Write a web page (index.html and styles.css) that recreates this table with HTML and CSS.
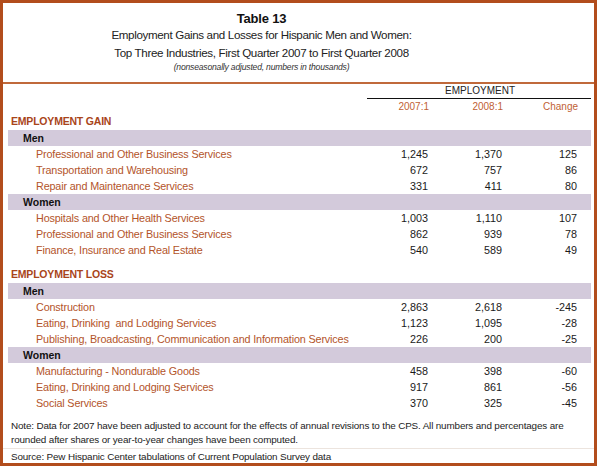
FILE: index.html
```html
<!DOCTYPE html>
<html>
<head>
<meta charset="utf-8">
<link rel="stylesheet" href="styles.css">
</head>
<body>
<div class="frame">
  <header class="head">
    <div class="t1">Table 13</div>
    <div class="t2">Employment Gains and Losses for Hispanic Men and Women:</div>
    <div class="t2">Top Three Industries, First Quarter 2007 to First Quarter 2008</div>
    <div class="t3">(nonseasonally adjusted, numbers in thousands)</div>
  </header>
  <div class="sep"></div>
  <div class="colhead">
    <div class="emp">EMPLOYMENT</div>
    <div class="cols"><span>2007:1</span><span>2008:1</span><span>Change</span></div>
  </div>

  <div class="sec">EMPLOYMENT GAIN</div>
  <div class="band">Men</div>
  <div class="row"><span class="lbl">Professional and Other Business Services</span><span>1,245</span><span>1,370</span><span>125</span></div>
  <div class="row"><span class="lbl">Transportation and Warehousing</span><span>672</span><span>757</span><span>86</span></div>
  <div class="row"><span class="lbl">Repair and Maintenance Services</span><span>331</span><span>411</span><span>80</span></div>
  <div class="band">Women</div>
  <div class="row"><span class="lbl">Hospitals and Other Health Services</span><span>1,003</span><span>1,110</span><span>107</span></div>
  <div class="row"><span class="lbl">Professional and Other Business Services</span><span>862</span><span>939</span><span>78</span></div>
  <div class="row"><span class="lbl">Finance, Insurance and Real Estate</span><span>540</span><span>589</span><span>49</span></div>

  <div class="sec loss">EMPLOYMENT LOSS</div>
  <div class="band">Men</div>
  <div class="row"><span class="lbl">Construction</span><span>2,863</span><span>2,618</span><span>-245</span></div>
  <div class="row"><span class="lbl">Eating, Drinking&nbsp; and Lodging Services</span><span>1,123</span><span>1,095</span><span>-28</span></div>
  <div class="row"><span class="lbl">Publishing, Broadcasting, Communication and Information Services</span><span>226</span><span>200</span><span>-25</span></div>
  <div class="band">Women</div>
  <div class="row"><span class="lbl">Manufacturing - Nondurable Goods</span><span>458</span><span>398</span><span>-60</span></div>
  <div class="row"><span class="lbl">Eating, Drinking and Lodging Services</span><span>917</span><span>861</span><span>-56</span></div>
  <div class="row"><span class="lbl">Social Services</span><span>370</span><span>325</span><span>-45</span></div>

  <div class="note">Note: Data for 2007 have been adjusted to account for the effects of annual revisions to the CPS. All numbers and percentages are rounded after shares or year-to-year changes have been computed.</div>
  <div class="source">Source: Pew Hispanic Center tabulations of Current Population Survey data</div>
</div>
</body>
</html>
```

FILE: styles.css
```css
* { box-sizing: border-box; }
html, body { margin: 0; padding: 0; background: #fff; }
body {
  font-family: "Liberation Sans", Arial, sans-serif;
  color: #222;
}
.frame {
  width: 597px;
  height: 466px;
  border: 3px solid #b24d1c;
}
.head {
  height: 79px;
  text-align: center;
  padding-top: 9px;
  padding-right: 74px;
}
.t1 {
  font-weight: bold;
  font-size: 13px;
  line-height: 14px;
  color: #111;
  letter-spacing: -0.2px;
}
.t2 {
  font-size: 11.6px;
  line-height: 17.5px;
  color: #222;
  letter-spacing: -0.35px;
}
.t3 {
  font-style: italic;
  font-size: 8.6px;
  line-height: 12px;
  color: #333;
  letter-spacing: -0.2px;
}
.sep {
  height: 2px;
  background: #c0693b;
}
.colhead {
  height: 29px;
  padding-top: 1px;
}
.emp {
  margin-left: 364px;
  width: 224px;
  text-align: center;
  font-size: 10px;
  line-height: 11px;
  padding-left: 2px;
  color: #222;
  border-bottom: 1.5px solid #111;
  padding-bottom: 2px;
}
.cols {
  display: grid;
  grid-template-columns: 1fr 74px 74px 75px;
  padding-right: 16px;
  font-size: 10px;
  line-height: 12px;
  color: #bf5f35;
  padding-top: 2px;
}
.cols span { text-align: right; }
.cols span:first-child { grid-column: 2; }
.sec {
  height: 17px;
  line-height: 17px;
  padding-left: 8px;
  font-size: 10.5px;
  font-weight: bold;
  color: #a9451a;
  letter-spacing: -0.2px;
}
.sec.loss { margin-top: 8px; }
.band {
  margin: 0 3px 0 5px;
  height: 16px;
  line-height: 16px;
  background: #d3cadb;
  padding-left: 15px;
  font-size: 10.5px;
  font-weight: bold;
  color: #111;
}
.row {
  display: grid;
  grid-template-columns: 1fr 74px 74px 75px;
  padding-right: 17px;
  height: 16px;
  line-height: 16px;
  font-size: 10.8px;
  color: #1a1a1a;
}
.row span { text-align: right; white-space: nowrap; }
.row .lbl {
  text-align: left;
  padding-left: 33px;
  color: #b3542a;
  letter-spacing: -0.15px;
}
.note {
  margin-top: 8px;
  padding-left: 8px;
  padding-right: 30px;
  font-size: 9.9px;
  line-height: 14px;
  color: #222;
  letter-spacing: -0.15px;
}
.source {
  margin-top: 1px;
  padding-left: 8px;
  padding-top: 1px;
  border-top: 1px solid #ece4de;
  font-size: 9.9px;
  line-height: 14px;
  color: #222;
  letter-spacing: -0.15px;
}
```
